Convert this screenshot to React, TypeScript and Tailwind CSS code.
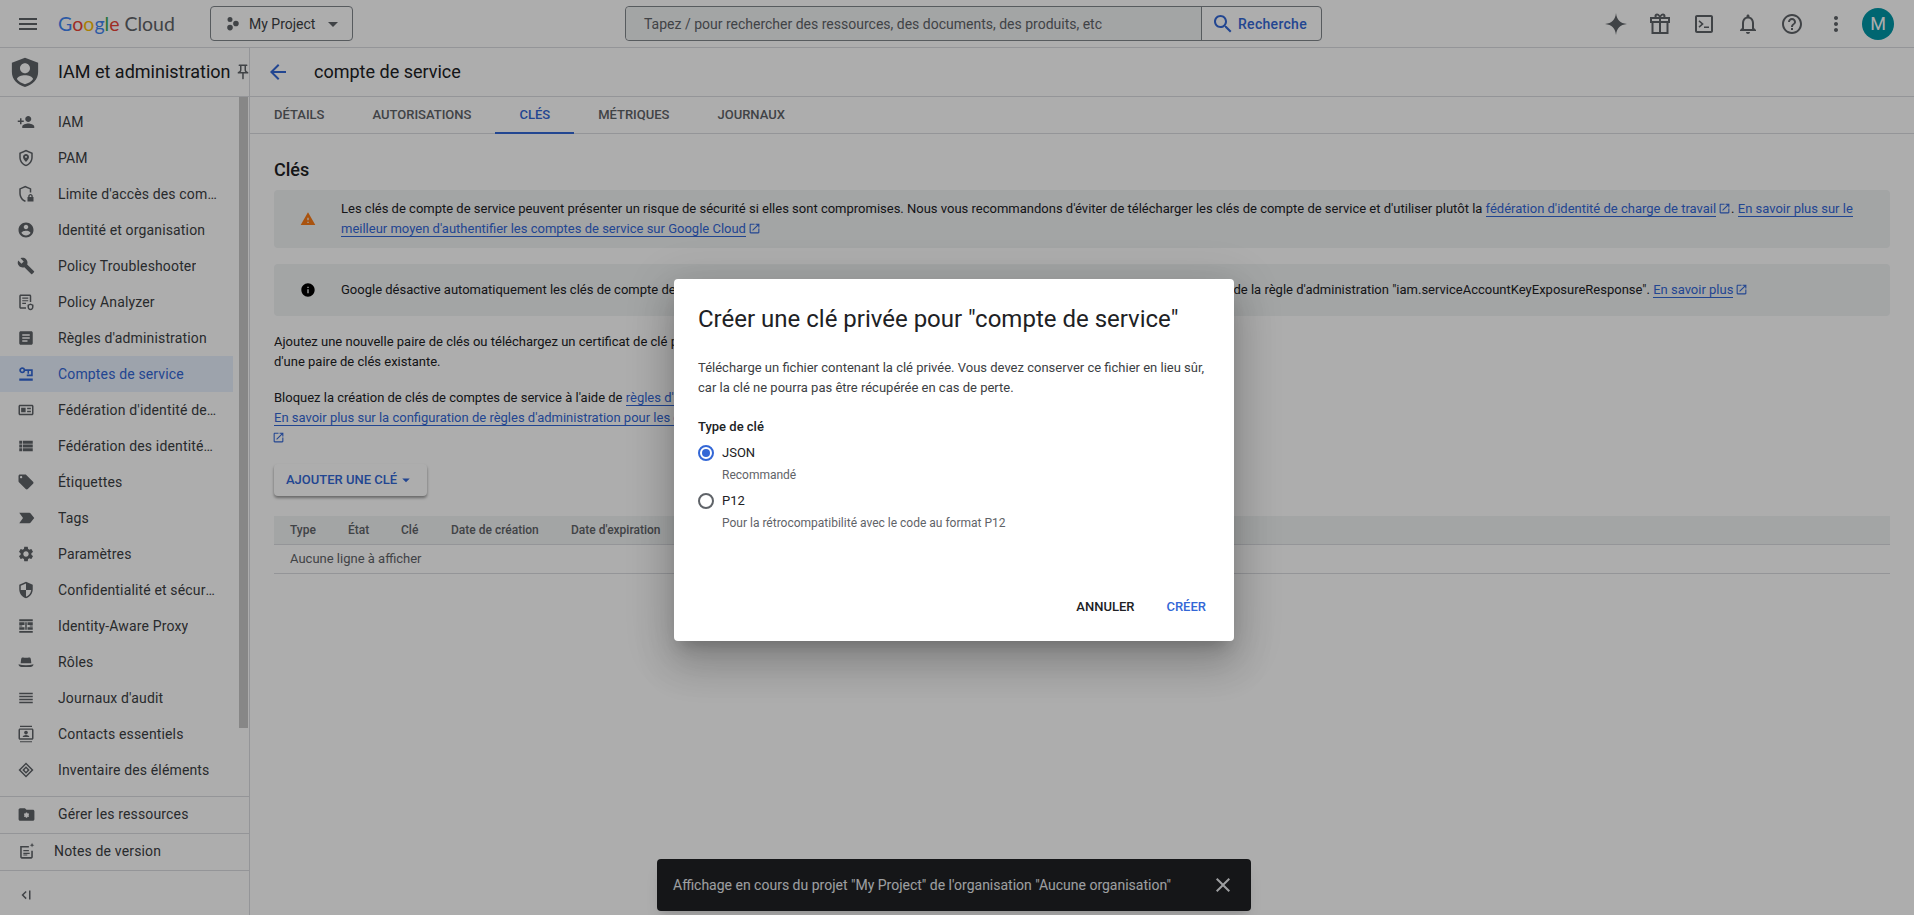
import type { ReactNode } from "react";

const P = ({ d, className = "w-[18px] h-[18px] text-[#5f6368]" }: { d: string; className?: string }) => (
  <svg viewBox="0 0 24 24" className={`shrink-0 fill-current ${className}`}>
    <path fillRule="evenodd" d={d} />
  </svg>
);

const paths = {
  menu: "M3 18h18v-2H3v2zm0-5h18v-2H3v2zm0-7v2h18V6H3z",
  back: "M20 11H7.83l5.59-5.59L12 4l-8 8 8 8 1.41-1.41L7.83 13H20v-2z",
  search:
    "M15.5 14h-.79l-.28-.27C15.41 12.59 16 11.11 16 9.5 16 5.91 13.09 3 9.5 3S3 5.91 3 9.5 5.91 16 9.5 16c1.61 0 3.09-.59 4.23-1.57l.27.28v.79l5 4.99L20.49 19l-4.99-5zm-6 0C7.01 14 5 11.99 5 9.5S7.01 5 9.5 5 14 7.01 14 9.5 11.99 14 9.5 14z",
  warning: "M1 21h22L12 2 1 21zm12-3h-2v-2h2v2zm0-4h-2v-4h2v4z",
  info: "M12 2C6.48 2 2 6.48 2 12s4.48 10 10 10 10-4.48 10-10S17.52 2 12 2zm1 15h-2v-6h2v6zm0-8h-2V7h2v2z",
  close:
    "M19 6.41L17.59 5 12 10.59 6.41 5 5 6.41 10.59 12 5 17.59 6.41 19 12 13.41 17.59 19 19 17.59 13.41 12z",
  more: "M12 8c1.1 0 2-.9 2-2s-.9-2-2-2-2 .9-2 2 .9 2 2 2zm0 2c-1.1 0-2 .9-2 2s.9 2 2 2 2-.9 2-2-.9-2-2-2zm0 6c-1.1 0-2 .9-2 2s.9 2 2 2 2-.9 2-2-.9-2-2-2z",
  help: "M11 18h2v-2h-2v2zm1-16C6.48 2 2 6.48 2 12s4.48 10 10 10 10-4.48 10-10S17.52 2 12 2zm0 18c-4.41 0-8-3.59-8-8s3.59-8 8-8 8 3.59 8 8-3.59 8-8 8zm0-14c-2.21 0-4 1.79-4 4h2c0-1.1.9-2 2-2s2 .9 2 2c0 2-3 1.75-3 5h2c0-2.25 3-2.5 3-5 0-2.21-1.79-4-4-4z",
  bell: "M12 22c1.1 0 2-.9 2-2h-4c0 1.1.89 2 2 2zm6-6v-5c0-3.07-1.64-5.64-4.5-6.32V4c0-.83-.67-1.5-1.5-1.5s-1.5.67-1.5 1.5v.68C7.63 5.36 6 7.92 6 11v5l-2 2v1h16v-1l-2-2zm-2 1H8v-6c0-2.48 1.51-4.5 4-4.5s4 2.02 4 4.5v6z",
  spark: "M12 1C12.8 8 16 11.2 23 12 16 12.8 12.8 16 12 23 11.2 16 8 12.8 1 12 8 11.2 11.2 8 12 1z",
  gift: "M9 1.5c-1.4 0-2.5 1.1-2.5 2.5 0 .4.1.7.2 1H2v6h1.5v11h17V11H22V5h-4.7c.1-.3.2-.6.2-1 0-1.4-1.1-2.5-2.5-2.5-1.2 0-2.3.8-3 1.9-.7-1.1-1.8-1.9-3-1.9zm0 2c.8 0 1.6.6 2 1.5H9c-.3 0-.5-.2-.5-.5s.2-1 .5-1zm6 0c.3 0 .5.7.5 1s-.2.5-.5.5h-2c.4-.9 1.2-1.5 2-1.5zM4 7h7v2H4V7zm9 0h7v2h-7V7zM5.5 11H11v9H5.5v-9zm7.5 0h5.5v9H13v-9z",
  terminal:
    "M5 3h14c1.1 0 2 .9 2 2v14c0 1.1-.9 2-2 2H5c-1.1 0-2-.9-2-2V5c0-1.1.9-2 2-2zm0 2v14h14V5H5zm2.5 3.2L11.8 12l-4.3 3.8-1-1.2 2.9-2.6-2.9-2.6 1-1.2zM12 14.5h5V16h-5v-1.5z",
  personAdd:
    "M15 12c2.21 0 4-1.79 4-4s-1.79-4-4-4-4 1.79-4 4 1.79 4 4 4zm-9-2V7H4v3H1v2h3v3h2v-3h3v-2H6zm9 4c-2.67 0-8 1.34-8 4v2h16v-2c0-2.66-5.33-4-8-4z",
  pam: "M12 1L3 5v6c0 5.55 3.84 10.74 9 12 5.16-1.26 9-6.45 9-12V5l-9-4zm0 2.2l7 3.1V11c0 4.5-3 8.8-7 10-4-1.2-7-5.500-7-10V6.300l7-3.100zM12 6.500c-2.200 0-4 1.800-4 4 0 2.800 4 6.500 4 6.500s4-3.700 4-6.500c0-2.200-1.800-4-4-4zm0 2.700c.700 0 1.300.6 1.300 1.300s-.6 1.300-1.300 1.300-1.300-.6-1.300-1.300.6-1.300 1.300-1.300z",
  limit:
    "M11 1L3 4.500V11c0 5.400 3.500 10.400 8 11.700l.6-2.100C8 19.500 5 15.300 5 11V5.800l6-2.600 6 2.600V10h2V4.500L11 1zM18 12c-1.700 0-3 1.300-3 3v1h-1v6h8v-6h-1v-1c0-1.700-1.300-3-3-3zm0 1.800c.7 0 1.200.5 1.200 1.200v1h-2.400v-1c0-.7.5-1.200 1.200-1.200z",
  account:
    "M12 2C6.48 2 2 6.48 2 12s4.48 10 10 10 10-4.48 10-10S17.52 2 12 2zm0 3c1.66 0 3 1.34 3 3s-1.34 3-3 3-3-1.34-3-3 1.34-3 3-3zm0 14.2c-2.5 0-4.71-1.28-6-3.22.03-1.99 4-3.08 6-3.08 1.99 0 5.97 1.09 6 3.08-1.29 1.94-3.5 3.22-6 3.22z",
  build:
    "M22.7 19l-9.1-9.1c.9-2.3.4-5-1.5-6.9-2-2-5-2.4-7.4-1.3L9 6 6 9 1.6 4.7C.4 7.1.9 10.1 2.9 12.1c1.9 1.9 4.6 2.4 6.9 1.5l9.100 9.100c.4.4 1 .4 1.400 0l2.300-2.300c.5-.4.5-1.100.1-1.400z",
  analyzer:
    "M5 2h12c1.100 0 2 .9 2 2v8h-2V4H5v15h7v2H5c-1.100 0-2-.9-2-2V4c0-1.100.9-2 2-2zm2 4h8v1.500H7V6zm0 3.500h8V11H7V9.500zM7 13h5v1.500H7V13zm11 1l-4 1.500v3c0 2.200 1.700 4 4 4.500 2.300-.5 4-2.300 4-4.500v-3L18 14zm0 2l2 .8v1.700c0 1.200-.8 2.200-2 2.600-1.200-.4-2-1.400-2-2.600v-1.700l2-.8z",
  article:
    "M19 3H5c-1.1 0-2 .9-2 2v14c0 1.1.9 2 2 2h14c1.1 0 2-.9 2-2V5c0-1.1-.9-2-2-2zm-5 14H7v-2h7v2zm3-4H7v-2h10v2zm0-4H7V7h10v2z",
  serviceKey:
    "M3 18h18v3H3v-3zM7 3c2 0 3.500 1.200 3.800 2.800H21V15h-8v-2.200h5.800V8h-2.800v3.500h-2V8h-3.200C10.400 10 8.900 11 7 11c-2.200 0-4-1.800-4-4s1.800-4 4-4zm0 2.300c-1 0-1.700.8-1.700 1.700S6 8.700 7 8.700 8.700 8 8.700 7 8 5.300 7 5.300z",
  card: "M4 5h16c1.100 0 2 .9 2 2v10c0 1.100-.9 2-2 2H4c-1.100 0-2-.9-2-2V7c0-1.100.9-2 2-2zm0 2v10h16V7H4zm1.500 2h6v6h-6V9zm8 0h5v2h-5V9zm0 4h5v2h-5v-2z",
  viewList:
    "M3 14h4v-4H3v4zm0 5h4v-4H3v4zM3 9h4V5H3v4zm5 5h13v-4H8v4zm0 5h13v-4H8v4zM8 5v4h13V5H8z",
  offer:
    "M21.41 11.58l-9-9C12.05 2.22 11.55 2 11 2H4c-1.1 0-2 .9-2 2v7c0 .55.22 1.05.59 1.42l9 9c.36.36.86.58 1.41.58.55 0 1.05-.22 1.41-.59l7-7c.37-.36.59-.86.59-1.41 0-.55-.23-1.06-.59-1.42zM5.5 7C4.67 7 4 6.33 4 5.5S4.67 4 5.5 4 7 4.67 7 5.500 6.330 7 5.500 7z",
  label: "M3 5h13.500c.700 0 1.300.3 1.700.9L23 12l-4.800 6.100c-.4.6-1 .9-1.700.9H3l5-7-5-7z",
  settings:
    "M19.14 12.94c.04-.3.06-.61.06-.94 0-.32-.02-.64-.07-.94l2.03-1.58c.18-.14.23-.41.12-.61l-1.92-3.32c-.12-.22-.37-.29-.59-.22l-2.39.96c-.5-.38-1.03-.7-1.62-.94l-.36-2.54c-.04-.24-.24-.41-.48-.41h-3.84c-.24 0-.43.17-.47.41l-.36 2.54c-.59.24-1.13.57-1.62.94l-2.39-.96c-.22-.08-.47 0-.59.22L2.74 8.87c-.12.21-.08.47.12.61l2.03 1.58c-.05.3-.09.63-.09.94s.02.64.07.94l-2.03 1.58c-.18.14-.23.41-.12.61l1.92 3.32c.12.22.37.29.59.22l2.39-.96c.5.38 1.03.7 1.62.94l.36 2.54c.05.24.24.41.48.41h3.84c.24 0 .44-.17.47-.41l.36-2.54c.59-.24 1.13-.56 1.62-.94l2.39.96c.22.08.47 0 .59-.22l1.92-3.32c.12-.22.07-.47-.12-.61l-2.01-1.58zM12 15.6c-1.98 0-3.6-1.62-3.6-3.6s1.62-3.6 3.6-3.6 3.6 1.62 3.6 3.6-1.62 3.6-3.6 3.6z",
  security:
    "M12 1L3 5v6c0 5.55 3.84 10.74 9 12 5.16-1.26 9-6.45 9-12V5l-9-4zm0 10.99h7c-.53 4.12-3.28 7.79-7 8.94V12H5V6.3l7-3.11v8.8z",
  proxy:
    "M3 3h18v2.500H3V3zm0 15.500h18V21H3v-2.500zM3 7h7v3.500H3V7zm0 6.500h7V17H3v-3.500zM14 7h7v3.500h-7V7zm0 6.500h7V17h-7v-3.500zM3 11.200h4v1.600H3v-1.600zm14 0h4v1.600h-4v-1.600zM11 7h2v10h-2V7z",
  hat: "M7 6c1.500-.5 3 .3 5 .3s3.500-.8 5-.3c1 .3 1.400 1.500 1.600 3l.5 4.500H4.900L5.400 9c.2-1.500.6-2.700 1.600-3zM2 15c3 .8 6.500 1.200 10 1.200s7-.4 10-1.200c-.3 2.500-2 3.500-4 3.500H6C4 18.500 2.300 17.500 2 15z",
  reorder: "M3 15h18v-2H3v2zm0 4h18v-2H3v2zm0-8h18V9H3v2zm0-6v2h18V5H3z",
  contact:
    "M4 1h16v1.500H4V1zm0 20.500h16V23H4v-1.500zM4 4.500h16c1.100 0 2 .9 2 2V17.500c0 1.100-.9 2-2 2H4c-1.100 0-2-.9-2-2V6.500c0-1.100.9-2 2-2zm0 1.800v11.400h16V6.300H4zM12 7.500c1.400 0 2.500 1.100 2.500 2.500s-1.100 2.500-2.500 2.500S9.500 11.400 9.500 10 10.600 7.500 12 7.500zm0 5.700c2 0 4.500 1 4.500 2.800h-9c0-1.800 2.500-2.800 4.500-2.800z",
  inventory:
    "M12 2l10 10-10 10L2 12 12 2zm0 2.800L4.800 12l7.200 7.200 7.200-7.200L12 4.800zm0 2.200l5 5-5 5-5-5 5-5zm0 2.800L9.800 12l2.200 2.200 2.200-2.200L12 9.800z",
  folder:
    "M20 6h-8l-2-2H4c-1.100 0-2 .9-2 2v12c0 1.100.9 2 2 2h16c1.100 0 2-.9 2-2V8c0-1.100-.9-2-2-2zM12.800 9.500l.4 1.300 1.300-.3.8 1.300-.9 1 .9 1-.8 1.300-1.300-.3-.4 1.300h-1.600l-.4-1.300-1.300.3-.8-1.300.9-1-.9-1 .8-1.300 1.300.3.4-1.300h1.600z",
  notes:
    "M4 5h11v2H6v12h12v-8h2v8c0 1.100-.9 2-2 2H6c-1.100 0-2-.9-2-2V5zm4 5h7v1.800H8V10zm0 3.500h8v1.800H8v-1.800zm0 3.500h5v-1.300H8V17zM19 1l.8 2.200L22 4l-2.200.8L19 7l-.8-2.200L16 4l2.200-.8L19 1z",
  collapse: "M11.500 6.500l1.400 1.400L8.800 12l4.100 4.100-1.400 1.400L6 12l5.500-5.500zM16 6h2v12h-2V6z",
  external:
    "M19 19H5V5h7V3H5c-1.11 0-2 .9-2 2v14c0 1.1.89 2 2 2h14c1.1 0 2-.9 2-2v-7h-2v7zM14 3v2h3.59l-9.83 9.83 1.41 1.41L19 6.41V10h2V3h-7z",
  drop: "M7 10l5 5 5-5z",
  pin: "M14 4v5c0 1.12.37 2.16 1 3H9c.65-.86 1-1.9 1-3V4h4m3-2H7c-.55 0-1 .45-1 1s.45 1 1 1h1v5c0 1.66-1.34 3-3 3v2h5.97v7l1 1 1-1v-7H19v-2c-1.66 0-3-1.34-3-3V4h1c.55 0 1-.45 1-1s-.45-1-1-1z",
  shield:
    "M12 .5L1.500 4.500V12c0 6 4.500 10.200 10.500 12 6-1.800 10.500-6 10.500-12V4.500L12 .5zm0 4.500c2.200 0 4 1.800 4 4s-1.800 4-4 4-4-1.800-4-4 1.800-4 4-4zm0 9.500c3 0 6 1.200 6.500 3-1.400 1.900-3.700 3.400-6.500 4.200-2.800-.8-5.100-2.300-6.500-4.200.5-1.800 3.500-3 6.500-3z",
  projects:
    "M12 5.500a4 4 0 1 1-8 0 4 4 0 0 1 8 0zM22 12a4.500 4.500 0 1 1-9 0 4.500 4.500 0 0 1 9 0zM12.500 18.500a4.500 4.500 0 1 1-9 0 4.500 4.500 0 0 1 9 0z",
};

const navItems = [
  { label: "IAM", icon: paths.personAdd },
  { label: "PAM", icon: paths.pam },
  { label: "Limite d'accès des comptes principaux", icon: paths.limit },
  { label: "Identité et organisation", icon: paths.account },
  { label: "Policy Troubleshooter", icon: paths.build },
  { label: "Policy Analyzer", icon: paths.analyzer },
  { label: "Règles d'administration", icon: paths.article },
  { label: "Comptes de service", icon: paths.serviceKey, active: true },
  { label: "Fédération d'identité de charge de travail", icon: paths.card },
  { label: "Fédération des identités de personnel", icon: paths.viewList },
  { label: "Étiquettes", icon: paths.offer },
  { label: "Tags", icon: paths.label },
  { label: "Paramètres", icon: paths.settings },
  { label: "Confidentialité et sécurité", icon: paths.security },
  { label: "Identity-Aware Proxy", icon: paths.proxy },
  { label: "Rôles", icon: paths.hat },
  { label: "Journaux d'audit", icon: paths.reorder },
  { label: "Contacts essentiels", icon: paths.contact },
  { label: "Inventaire des éléments", icon: paths.inventory },
];

const tabs = ["DÉTAILS", "AUTORISATIONS", "CLÉS", "MÉTRIQUES", "JOURNAUX"];
const columns = [
  { label: "Type", width: "w-[58px]" },
  { label: "État", width: "w-[53px]" },
  { label: "Clé", width: "w-[50px]" },
  { label: "Date de création", width: "w-[120px]" },
  { label: "Date d'expiration", width: "w-[120px]" },
];

const Ext = ({ flush }: { flush?: boolean }) => (
  <P
    d={paths.external}
    className={`inline-block w-[13px] h-[13px] align-[-2px] text-[#3367d6] ${flush ? "-ml-[2px]" : "ml-[2px]"}`}
  />
);

const A = ({ children }: { children: ReactNode }) => (
  <span className="text-[#3367d6] border-b border-[#3367d6]">{children}</span>
);

const TopIcon = ({ d, size = "w-6 h-6" }: { d: string; size?: string }) => (
  <div className="w-11 h-11 flex items-center justify-center">
    <P d={d} className={`${size} text-[#5f6368]`} />
  </div>
);

const Header = () => (
  <header className="h-12 shrink-0 flex items-center border-b border-[#dadce0] pl-4 pr-5">
    <P d={paths.menu} className="w-6 h-6 text-[#5f6368]" />
    <div className="ml-[18px] w-[117px] flex items-baseline text-[19.5px] leading-none font-['Lato',sans-serif]">
      <span className="text-[#4285f4]">G</span>
      <span className="text-[#ea4335]">o</span>
      <span className="text-[#fbbc05]">o</span>
      <span className="text-[#4285f4]">g</span>
      <span className="text-[#34a853]">l</span>
      <span className="text-[#ea4335]">e</span>
      <span className="ml-[5px] text-[#5f6368]">Cloud</span>
    </div>
    <div className="ml-[35px] w-[143px] h-[35px] flex items-center border border-[#80868b] rounded pl-[14px] text-sm text-[#3c4043]">
      <P d={paths.projects} className="w-[15px] h-[15px] text-[#5f6368]" />
      <span className="ml-[9px]">My Project</span>
      <P d={paths.drop} className="w-6 h-6 ml-[6px] text-[#5f6368]" />
    </div>
    <div className="ml-[272px] w-[697px] h-[35px] flex border border-[#80868b] rounded text-sm">
      <div className="w-[576px] flex items-center pl-[18px] bg-[#f1f3f4] rounded-l border-r border-[#80868b] text-[#5f6368]">
        Tapez / pour rechercher des ressources, des documents, des produits, etc
      </div>
      <div className="flex-1 flex items-center pl-[9px] gap-[3px] text-[#3367d6] font-medium tracking-[0.3px]">
        <P d={paths.search} className="w-6 h-6 text-[#3367d6]" />
        <span>Recherche</span>
      </div>
    </div>
    <div className="ml-auto flex items-center">
      <TopIcon d={paths.spark} />
      <TopIcon d={paths.gift} />
      <TopIcon d={paths.terminal} />
      <TopIcon d={paths.bell} />
      <TopIcon d={paths.help} />
      <TopIcon d={paths.more} />
      <div className="ml-1 w-8 h-8 rounded-full bg-[#0097a7] text-white flex items-center justify-center text-lg">
        M
      </div>
    </div>
  </header>
);

const Sidebar = () => (
  <aside className="w-[250px] shrink-0 flex flex-col border-r border-[#dadce0]">
    <div className="h-[49px] shrink-0 flex items-center border-b border-[#dadce0] pl-[10px] pb-[1px]">
      <P d={paths.shield} className="w-[30px] h-[30px] text-[#5f6368]" />
      <span className="ml-[18px] text-[18px] text-[#202124] whitespace-nowrap">IAM et administration</span>
      <P d={paths.pin} className="w-[18px] h-[18px] ml-[3px] text-[#5f6368]" />
    </div>
    <div className="flex-1 flex min-h-0 overflow-hidden">
      <nav className="w-[233px] pt-[7px]">
        {navItems.map((item) => (
          <div
            key={item.label}
            className={`h-9 flex items-center gap-[23px] pl-[17px] pr-[15px] text-sm tracking-[0.15px] ${
              item.active ? "bg-[#e8f0fe] text-[#3367d6]" : "text-[#3c4043]"
            }`}
          >
            <P d={item.icon} className={`w-[18px] h-[18px] ${item.active ? "text-[#3367d6]" : "text-[#5f6368]"}`} />
            <span className="truncate">{item.label}</span>
          </div>
        ))}
      </nav>
      <div className="ml-[6px] w-[9px] h-[631px] bg-[#c8c8c8]" />
    </div>
    <div className="h-[37px] shrink-0 flex items-center gap-[22px] pl-[17px] pb-[2px] border-t border-[#dadce0] text-sm tracking-[0.15px] text-[#3c4043]">
      <P d={paths.folder} className="w-[19px] h-[19px] text-[#5f6368]" />
      <span>Gérer les ressources</span>
    </div>
    <div className="h-[37px] shrink-0 flex items-center gap-[18px] pl-[17px] pb-[2px] border-t border-[#dadce0] text-sm tracking-[0.15px] text-[#3c4043]">
      <P d={paths.notes} className="w-[19px] h-[19px] text-[#5f6368]" />
      <span>Notes de version</span>
    </div>
    <div className="h-[45px] shrink-0 flex items-center pl-[17px] pt-1 border-t border-[#dadce0]">
      <P d={paths.collapse} className="w-[18px] h-[18px] text-[#5f6368]" />
    </div>
  </aside>
);

const Banner = ({ icon, iconColor, children, h }: { icon: string; iconColor: string; children: ReactNode; h: string }) => (
  <div className={`${h} flex items-center bg-[#f1f3f4] rounded pl-[26px] pr-6`}>
    <P d={icon} className={`w-4 h-4 ${iconColor}`} />
    <div className="ml-[25px] flex-1">{children}</div>
  </div>
);

const Main = () => (
  <main className="flex-1 min-w-0 flex flex-col">
    <div className="h-[49px] shrink-0 flex items-center border-b border-[#dadce0] pl-4 pb-[1px]">
      <P d={paths.back} className="w-6 h-6 text-[#3367d6]" />
      <h1 className="ml-6 text-[18px] text-[#202124]">compte de service</h1>
    </div>
    <div className="h-[37px] shrink-0 flex border-b border-[#dadce0] text-[13px] font-medium">
      {tabs.map((t) => (
        <div
          key={t}
          className={`px-6 flex items-center border-b-2 -mb-px ${
            t === "CLÉS" ? "text-[#3367d6] border-[#3367d6]" : "text-[#5f6368] border-transparent"
          }`}
        >
          {t}
        </div>
      ))}
    </div>
    <div className="flex-1 px-6 pt-6 text-[13px] leading-5 text-[#202124]">
      <h2 className="text-[18px] leading-6 font-medium mb-2">Clés</h2>
      <Banner icon={paths.warning} iconColor="text-[#fa7b17]" h="h-[58px]">
        Les clés de compte de service peuvent présenter un risque de sécurité si elles sont compromises. Nous vous
        recommandons d'éviter de télécharger les clés de compte de service et d'utiliser plutôt la{" "}
        <A>fédération d'identité de charge de travail</A>
        <Ext />. <A>En savoir plus sur le meilleur moyen d'authentifier les comptes de service sur Google Cloud</A>
        <Ext />
      </Banner>
      <div className="h-4" />
      <Banner icon={paths.info} iconColor="text-black" h="h-[52px]">
        Google désactive automatiquement les clés de compte de service dont l'exposition a été détectée. Vous pouvez{" "}
        <span className="ml-1">encore</span> modifier ce comportement à l'aide de la règle d'administration
        "iam.serviceAccountKeyExposureResponse". <A>En savoir plus</A>
        <Ext />
      </Banner>
      <p className="mt-4">
        Ajoutez une nouvelle paire de clés ou téléchargez un certificat de clé publique à partir
        <br />
        d'une paire de clés existante.
      </p>
      <p className="mt-4">
        Bloquez la création de clés de comptes de service à l'aide de <A>règles d'administration</A>.
        <br />
        <A>En savoir plus sur la configuration de règles d'administration pour les comptes de service</A>
        <br />
        <Ext flush />
      </p>
      <button className="mt-4 h-8 w-[153px] pl-3 flex items-center rounded bg-white text-[#3367d6] font-medium shadow-[0_2px_3px_rgba(0,0,0,0.4)]">
        AJOUTER UNE CLÉ
        <P d={paths.drop} className="w-[18px] h-[18px] text-[#3367d6]" />
      </button>
      <div className="mt-5">
        <div className="h-[29px] flex items-center bg-[#f1f3f4] border-b border-[#dadce0] pl-4 text-xs font-medium text-[#5f6368]">
          {columns.map((c) => (
            <div key={c.label} className={c.width}>
              {c.label}
            </div>
          ))}
        </div>
        <div className="h-[29px] flex items-center border-b border-[#dadce0] pl-4 text-[#5f6368]">
          Aucune ligne à afficher
        </div>
      </div>
    </div>
  </main>
);

const Toast = () => (
  <div className="absolute left-[657px] bottom-1 w-[594px] h-[52px] flex items-center pl-4 rounded bg-[#202124] text-[#e8eaed] text-sm shadow-lg">
    Affichage en cours du projet "My Project" de l'organisation "Aucune organisation"
    <P d={paths.close} className="absolute right-[16px] w-6 h-6 text-[#e8eaed]" />
  </div>
);

const Radio = ({ on }: { on?: boolean }) => (
  <span
    className={`w-4 h-4 rounded-full border-2 flex items-center justify-center ${
      on ? "border-[#3367d6]" : "border-[#5f6368]"
    }`}
  >
    {on && <span className="w-2 h-2 rounded-full bg-[#3367d6]" />}
  </span>
);

const Dialog = () => (
  <div className="w-[560px] h-[362px] bg-white rounded flex flex-col pl-6 pt-6 text-[13px] leading-5 text-[#202124] shadow-[0_11px_15px_-7px_rgba(0,0,0,0.2),0_24px_38px_3px_rgba(0,0,0,0.14),0_9px_46px_8px_rgba(0,0,0,0.12)]">
    <h2 className="text-2xl leading-8 whitespace-nowrap">Créer une clé privée pour "compte de service"</h2>
    <p className="mt-[23px] text-[#3c4043]">
      Télécharge un fichier contenant la clé privée. Vous devez conserver ce fichier en lieu sûr,
      <br />
      car la clé ne pourra pas être récupérée en cas de perte.
    </p>
    <div className="mt-[19px] font-medium">Type de clé</div>
    <div className="mt-[6px] flex items-center gap-2 h-5">
      <Radio on />
      <span>JSON</span>
    </div>
    <div className="ml-6 mt-[2px] text-xs leading-5 text-[#5f6368]">Recommandé</div>
    <div className="mt-[6px] flex items-center gap-2 h-5">
      <Radio />
      <span>P12</span>
    </div>
    <div className="ml-6 mt-[2px] text-xs leading-5 text-[#5f6368]">
      Pour la rétrocompatibilité avec le code au format P12
    </div>
    <div className="mt-auto pb-6 pr-7 flex justify-end gap-8 font-medium">
      <span>ANNULER</span>
      <span className="text-[#3367d6]">CRÉER</span>
    </div>
  </div>
);

export default function App() {
  return (
    <div className="relative h-screen overflow-hidden flex flex-col bg-white font-['Roboto',sans-serif]">
      <Header />
      <div className="flex-1 flex min-h-0">
        <Sidebar />
        <Main />
      </div>
      <Toast />
      <div className="absolute inset-0 bg-black/[0.32] flex items-center justify-center pr-[6px] pt-[5px]">
        <Dialog />
      </div>
    </div>
  );
}
